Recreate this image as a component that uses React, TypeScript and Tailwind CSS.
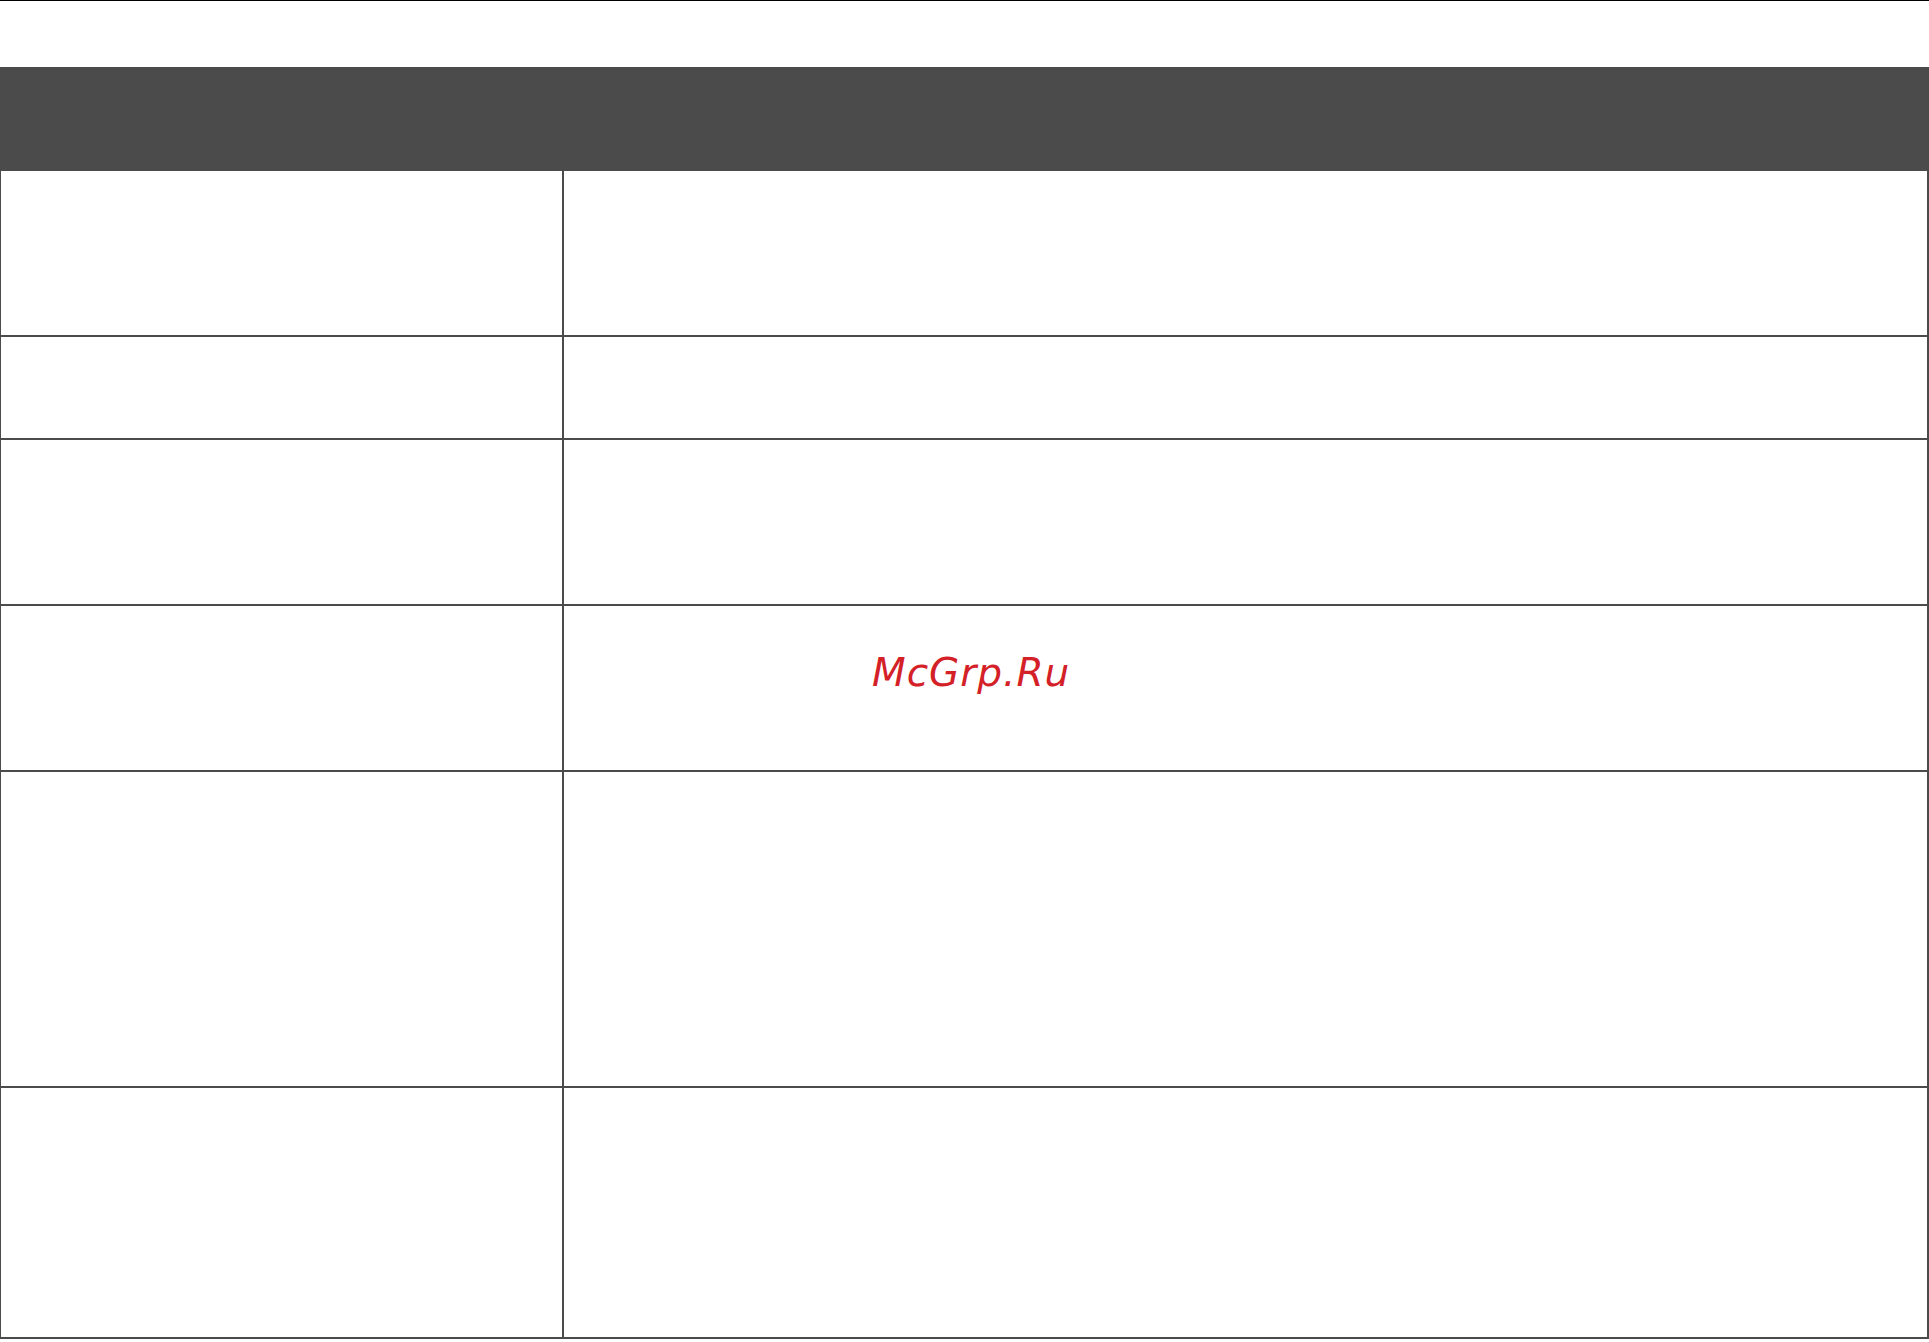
const rowHeights = [103, 166, 166, 316, 251]

export default function App() {
  return (
    <div className="relative min-h-screen w-[1929px] bg-white" style={{ fontFamily: '"DejaVu Sans", sans-serif' }}>
      <div className="h-px w-full bg-black" />
      <div className="h-[66px]" />
      <div className="h-[104px] w-full bg-[#4b4b4b]" />
      <div className="w-[1929px] border-l border-r-2 border-[#4b4b4b]">
        <div className="grid h-[166px] grid-cols-[563px_1fr] border-b-2 border-[#4b4b4b]">
          <div className="border-r-2 border-[#4b4b4b]" />
          <div />
        </div>
        {rowHeights.map((h, i) => (
          <div key={i} className="grid grid-cols-[563px_1fr] border-b-2 border-[#4b4b4b]" style={{ height: h }}>
            <div className="border-r-2 border-[#4b4b4b]" />
            <div />
          </div>
        ))}
      </div>
      <div className="absolute left-[872px] top-[653px] text-[39px] leading-none italic tracking-[1px] text-[#d42027]">
        McGrp.Ru
      </div>
    </div>
  )
}
